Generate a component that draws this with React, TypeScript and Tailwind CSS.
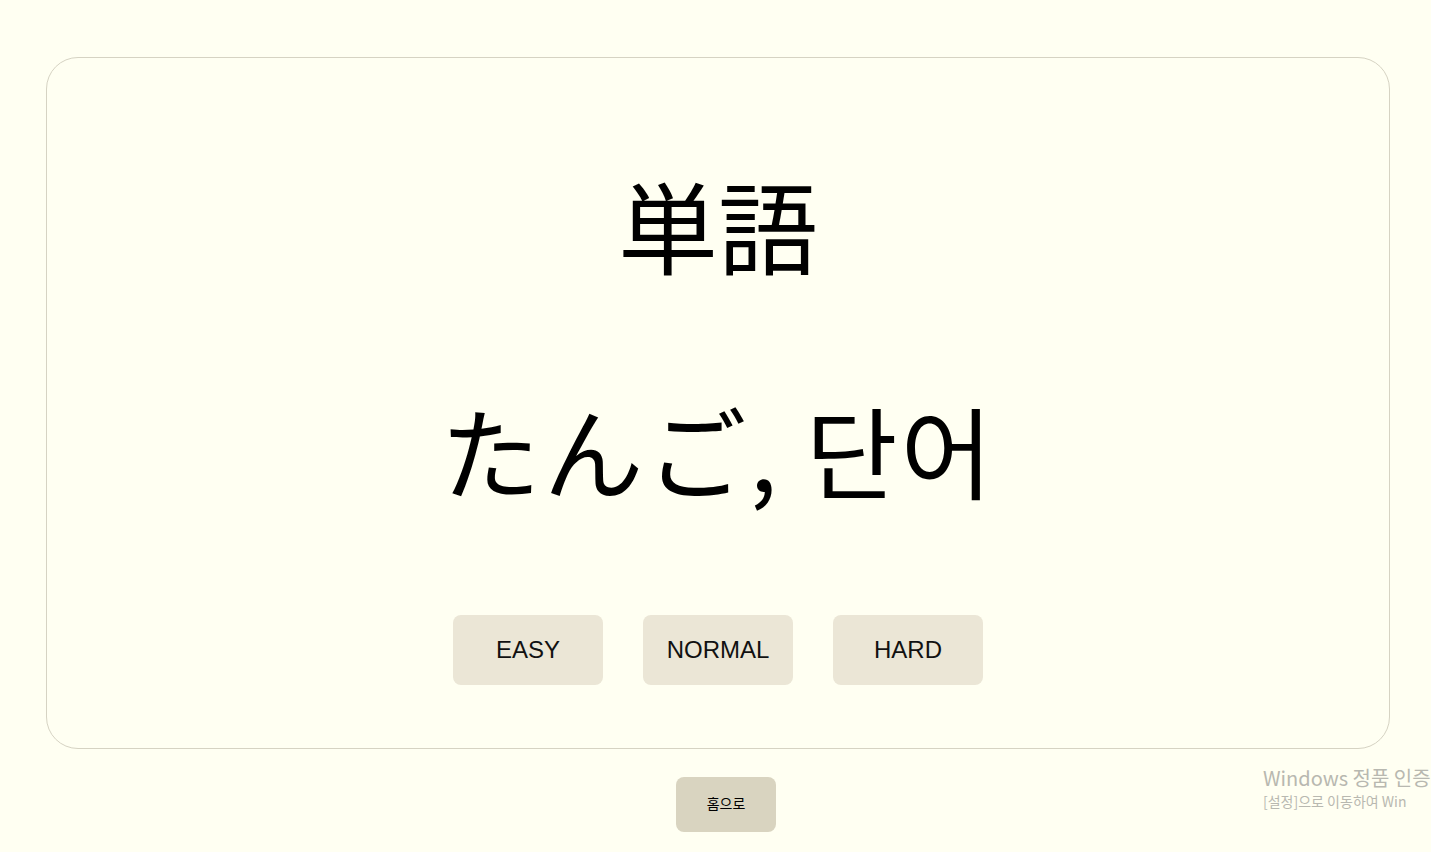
export default function App() {
  return (
    <div className="relative w-full min-h-screen overflow-hidden bg-[#fffff2] flex flex-col items-start pl-[46px] pt-[57px] font-['Liberation_Sans','Noto_Sans_CJK_KR',sans-serif]">
      {/* Card */}
      <div className="w-[1344px] h-[692px] border border-[#d6d3c3] rounded-[32px] flex flex-col items-center pt-[116px]">
        <h1 className="h-[100px] leading-[100px] text-[100px] text-black font-['Noto_Sans_CJK_JP',sans-serif]">
          単語
        </h1>
        <p className="mt-[125px] h-[100px] leading-[100px] text-[100px] tracking-[3px] text-black font-['Noto_Sans_CJK_JP','Noto_Sans_CJK_KR',sans-serif]">
          たんご, 단어
        </p>

        {/* Difficulty buttons */}
        <div className="mt-[116px] flex gap-[40px]">
          <button className="w-[150px] h-[70px] rounded-[8px] bg-[#ebe6d6] text-[24px] text-[#111]">EASY</button>
          <button className="w-[150px] h-[70px] rounded-[8px] bg-[#ebe6d6] text-[24px] text-[#111]">NORMAL</button>
          <button className="w-[150px] h-[70px] rounded-[8px] bg-[#ebe6d6] text-[24px] text-[#111]">HARD</button>
        </div>
      </div>

      <button className="mt-[28px] ml-[630px] w-[100px] h-[55px] rounded-[8px] bg-[#d9d4c0] text-[14px] text-black">
        홈으로
      </button>

      {/* Windows activation watermark */}
      <div className="absolute left-[1263px] top-[765px] whitespace-nowrap text-[#b8b8b0] font-['Noto_Sans_CJK_KR',sans-serif]">
        <div className="text-[20px] leading-[26px]">Windows 정품 인증</div>
        <div className="text-[14px] leading-[20px]">[설정]으로 이동하여 Win</div>
      </div>
    </div>
  );
}
